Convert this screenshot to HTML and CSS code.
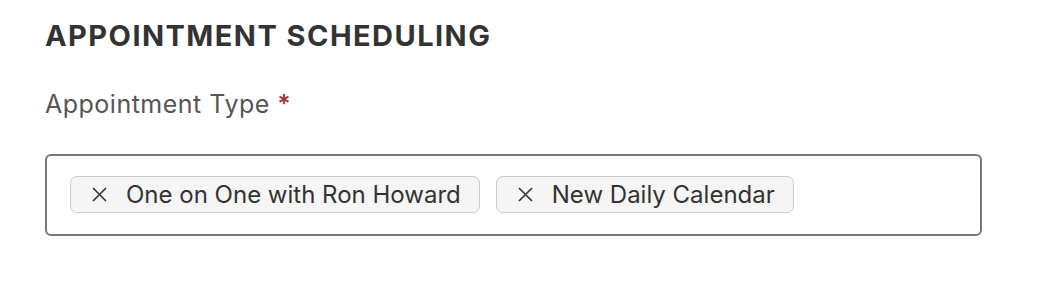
FILE: index.html
```html
<!DOCTYPE html>
<html>
<head>
<meta charset="utf-8">
<link rel="stylesheet" href="styles.css">
</head>
<body>
<div class="page">
  <h1 class="title">APPOINTMENT SCHEDULING</h1>
  <div class="label">Appointment Type <span class="req">*</span></div>
  <div class="box">
    <span class="chip"><svg class="x" viewBox="0 0 15 15" width="15" height="15"><path d="M1 1L14 14M14 1L1 14" stroke="#333" stroke-width="1.6" fill="none"/></svg><span>One on One with Ron Howard</span></span>
    <span class="chip"><svg class="x" viewBox="0 0 15 15" width="15" height="15"><path d="M1 1L14 14M14 1L1 14" stroke="#333" stroke-width="1.6" fill="none"/></svg><span>New Daily Calendar</span></span>
  </div>
</div>
</body>
</html>
```
FILE: styles.css
```css
html, body { margin: 0; padding: 0; background: #fff; }
body { font-family: Inter, "Noto Sans", sans-serif; color: #333; }
.page { padding: 18px 0 0 45px; width: 937px; }
.title { margin: 0; font-size: 29px; font-weight: 700; color: #333; line-height: 36px; letter-spacing: 1.45px; }
.label { margin-top: 34px; font-size: 25px; color: #555; line-height: 32px; letter-spacing: 0.5px; }
.req { color: #a33a3a; font-weight: 600; }
.box { margin-top: 34px; border: 2px solid #777; border-radius: 6px; padding: 20px 23px; display: flex; gap: 16px; height: 38px; }
.chip { display: flex; align-items: center; gap: 19px; height: 35px; padding: 0 18px 0 21px; background: #f5f5f5; border: 1.5px solid #ccc; border-radius: 7px; font-size: 24px; letter-spacing: 0; color: #333; }
.x { display: block; }
```
